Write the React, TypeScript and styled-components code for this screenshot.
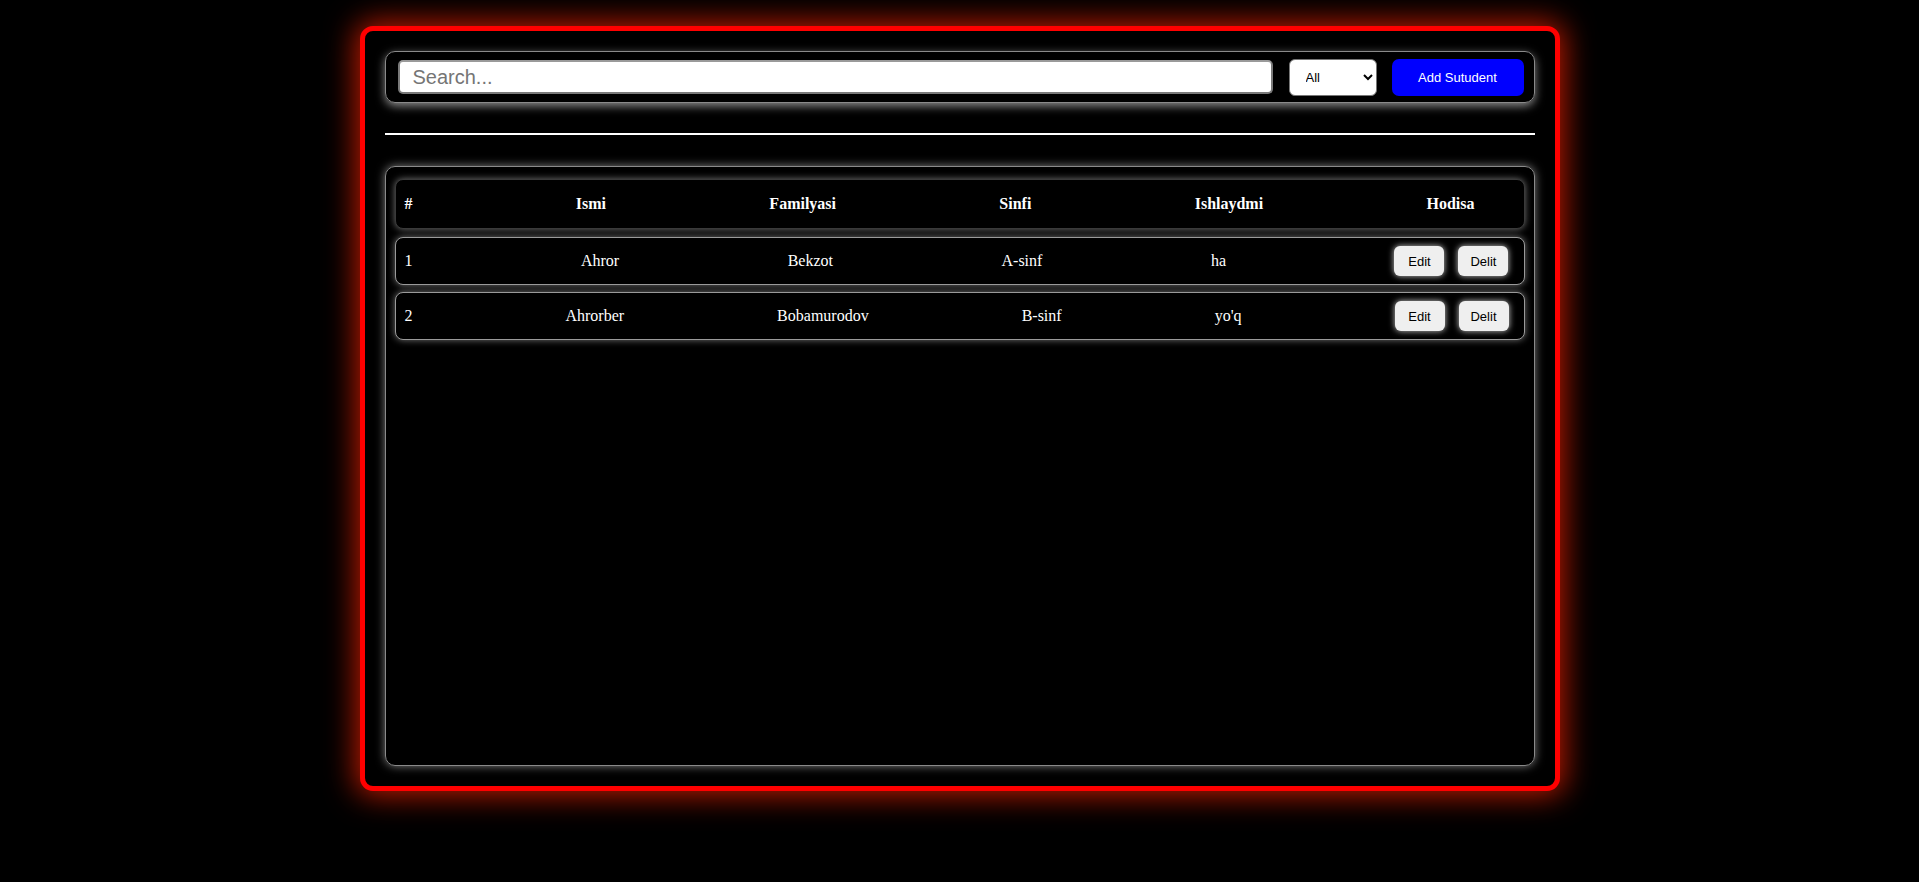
import React from "react";
import styled, { createGlobalStyle } from "styled-components";

const GlobalStyle = createGlobalStyle`
  html, body {
    margin: 0;
    padding: 0;
    background: #000;
    min-height: 100vh;
  }
  body {
    font-family: "Liberation Serif", "Times New Roman", serif;
  }
  #root {
    min-height: 100vh;
    padding-top: 26px;
    box-sizing: border-box;
  }
  * { box-sizing: border-box; }
`;

const Frame = styled.div`
  width: 1200px;
  height: 765px;
  margin: 0 auto;
  border: 5px solid #ff0000;
  border-radius: 13px;
  background: #000;
  padding: 20px;
  box-shadow: 0 0 30px 4px rgba(255, 35, 0, 0.75);
  display: flex;
  flex-direction: column;
`;

const Toolbar = styled.div`
  height: 52px;
  border: 1px solid #8a8a8a;
  border-radius: 10px;
  padding: 0 10px 0 12px;
  display: flex;
  align-items: center;
  gap: 15px;
  box-shadow: 0 3px 10px rgba(255, 255, 255, 0.55);
`;

const SearchInput = styled.input`
  flex: 1;
  height: 34px;
  margin-right: 1px;
  border: 2px solid #7a7a7a;
  border-top-color: #9a9a9a;
  border-radius: 5px;
  background: #fff;
  padding: 0 0 0 13px;
  font-family: "Liberation Sans", Arial, sans-serif;
  font-size: 20px;
  color: #000;
  outline: none;
  &::placeholder {
    color: #757575;
  }
`;

const Select = styled.select`
  width: 88px;
  height: 37px;
  border: 1px solid #767676;
  border-radius: 6px;
  background: #fff;
  padding: 0 8px 0 12px;
  font-family: "Liberation Sans", Arial, sans-serif;
  font-size: 13px;
  color: #000;
`;

const AddButton = styled.button`
  width: 132px;
  height: 37px;
  border: none;
  border-radius: 7px;
  background: #0000ff;
  color: #fff;
  font-family: "Liberation Sans", Arial, sans-serif;
  font-size: 13px;
  cursor: pointer;
`;

const Divider = styled.div`
  height: 2px;
  background: #fff;
  margin: 30px 0 31px;
`;

const TableBox = styled.div`
  height: 600px;
  border: 1px solid #8a8a8a;
  border-radius: 10px;
  padding: 12px 9px;
  display: flex;
  flex-direction: column;
  gap: 7px;
  box-shadow: 0 0 10px rgba(255, 255, 255, 0.5);
`;

const Row = styled.div<{ $head?: boolean }>`
  height: ${(p) => (p.$head ? "50px" : "48px")};
  margin-bottom: ${(p) => (p.$head ? "1px" : "0")};
  border: 1px solid ${(p) => (p.$head ? "#3a3a3a" : "#9a9a9a")};
  border-radius: 8px;
  padding: ${(p) => (p.$head ? "0 49px 0 9px" : "0 15px 0 9px")};
  display: flex;
  align-items: center;
  justify-content: space-between;
  color: #fff;
  font-size: 16px;
  font-weight: ${(p) => (p.$head ? 700 : 400)};
  box-shadow: 0 0 7px rgba(255, 255, 255, 0.45);
  background: #000;
`;

const Cell = styled.span`
  white-space: nowrap;
`;

const Actions = styled.div`
  display: flex;
  gap: 14px;
`;

const SmallButton = styled.button`
  width: 50px;
  height: 30px;
  border: none;
  border-radius: 6px;
  background: #efefef;
  color: #000;
  font-family: "Liberation Sans", Arial, sans-serif;
  font-size: 13px;
  padding: 0;
  box-shadow: 0 0 6px rgba(255, 255, 255, 0.8);
  cursor: pointer;
`;

const students = [
  { id: 1, name: "Ahror", surname: "Bekzot", grade: "A-sinf", works: "ha" },
  { id: 2, name: "Ahrorber", surname: "Bobamurodov", grade: "B-sinf", works: "yo'q" },
];

export default function App() {
  return (
    <>
      <GlobalStyle />
      <Frame>
        <Toolbar>
          <SearchInput placeholder="Search..." />
          <Select defaultValue="all">
            <option value="all">All</option>
            <option value="ha">ha</option>
            <option value="yoq">yo'q</option>
          </Select>
          <AddButton>Add Sutudent</AddButton>
        </Toolbar>
        <Divider />
        <TableBox>
          <Row $head>
            <Cell>#</Cell>
            <Cell>Ismi</Cell>
            <Cell>Familyasi</Cell>
            <Cell>Sinfi</Cell>
            <Cell>Ishlaydmi</Cell>
            <Cell>Hodisa</Cell>
          </Row>
          {students.map((s) => (
            <Row key={s.id}>
              <Cell>{s.id}</Cell>
              <Cell>{s.name}</Cell>
              <Cell>{s.surname}</Cell>
              <Cell>{s.grade}</Cell>
              <Cell>{s.works}</Cell>
              <Actions>
                <SmallButton>Edit</SmallButton>
                <SmallButton>Delit</SmallButton>
              </Actions>
            </Row>
          ))}
        </TableBox>
      </Frame>
    </>
  );
}
